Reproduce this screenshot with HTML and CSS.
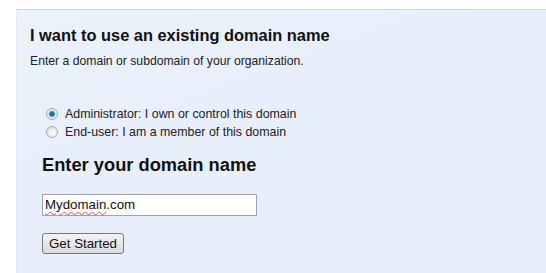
FILE: index.html
```html
<!DOCTYPE html>
<html>
<head>
<meta charset="utf-8">
<link rel="stylesheet" href="styles.css">
</head>
<body>
<div class="panel">
  <h1 class="title">I want to use an existing domain name</h1>
  <p class="sub">Enter a domain or subdomain of your organization.</p>
  <div class="roles">
    <label class="role"><input class="radio" type="radio" name="role" checked><span>Administrator: I own or control this domain</span></label>
    <label class="role"><input class="radio" type="radio" name="role"><span>End-user: I am a member of this domain</span></label>
  </div>
  <div class="entry">
    <h2 class="title2">Enter your domain name</h2>
    <div class="field"><span class="spell">Mydomain</span>.com</div>
    <button class="btn">Get Started</button>
  </div>
</div>
</body>
</html>
```

FILE: styles.css
```css
html, body { margin: 0; padding: 0; background: #fff; }
body { font-family: "Liberation Sans", Arial, sans-serif; color: #000; }
.panel {
  margin: 9px 0 0 16px;
  height: 264px;
  box-sizing: border-box;
  background: linear-gradient(160deg, #ecf2fa 0%, #e8effb 40%, #e8effb 100%);
  border-top: 1px solid #d3d8e0;
  border-left: 1px solid #e3e9f2;
  padding: 15px 0 0 13px;
}
.title { font-size: 16.4px; font-weight: bold; margin: 0; line-height: 20px; color: #111; }
.sub { font-size: 12.2px; margin: 9px 0 0; line-height: 14px; color: #222; }
.roles { margin-top: 39px; padding-left: 16px; display: flex; flex-direction: column; gap: 4px; }
.role { display: flex; align-items: center; font-size: 12.4px; line-height: 14px; color: #222; }
.radio {
  appearance: none; -webkit-appearance: none;
  margin: 0 7px 0 0; width: 12px; height: 12px; box-sizing: border-box;
  border-radius: 50%;
  border: 1px solid #a6abb0;
  background: radial-gradient(circle at 60% 65%, #fdfdfd 0%, #e4e6e8 70%, #cfd2d5 100%);
}
.radio:checked {
  background: radial-gradient(circle at 50% 50%, #1d5a74 0, #2f7d9c 2px, #7fb4c7 3px, #eef1f3 3.8px, #dfe2e5 100%);
}
.entry { padding-left: 12px; margin-top: 15px; }
.title2 { font-size: 18.3px; font-weight: bold; margin: 0; line-height: 22px; color: #111; }
.field {
  margin-top: 18px;
  width: 215px; height: 22px; box-sizing: border-box;
  background: #fff; border: 1px solid #a0a4aa;
  font-size: 13.3px; line-height: 19px; padding-left: 2px; color: #111;
}
.spell { text-decoration: underline wavy #e05050; text-decoration-thickness: 1px; text-underline-offset: 2px; }
.btn {
  margin-top: 17px; display: block;
  font-family: "Liberation Sans", Arial, sans-serif; font-size: 13.3px;
  height: 21px; padding: 0 6px; border: 1px solid #767a80; border-radius: 3px;
  background: linear-gradient(#f4f4f4, #dcdcdc); color: #111;
}
```
